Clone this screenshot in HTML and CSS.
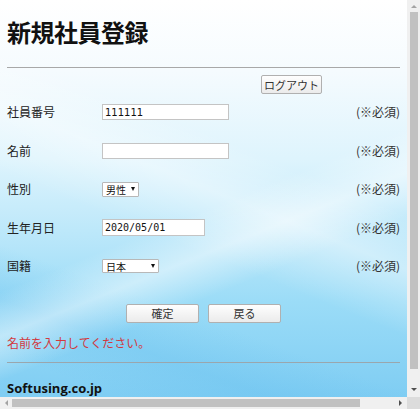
FILE: index.html
```html
<!DOCTYPE html>
<html lang="ja">
<head>
<meta charset="utf-8">
<title>新規社員登録</title>
<link rel="stylesheet" href="styles.css">
</head>
<body>
<div class="window">
  <main class="page">
    <h1 class="title">新規社員登録</h1>
    <hr class="rule rule-top">
    <div class="logout-row"><button class="btn btn-logout" type="button">ログアウト</button></div>
    <form class="form">
      <label class="label">社員番号</label>
      <div class="field"><input class="input input-id" type="text" value="111111"></div>
      <span class="req">(※必須)</span>

      <label class="label">名前</label>
      <div class="field"><input class="input input-name" type="text" value=""></div>
      <span class="req">(※必須)</span>

      <label class="label">性別</label>
      <div class="field"><span class="select select-sex"><span class="select-text">男性</span><span class="arrow"></span></span></div>
      <span class="req">(※必須)</span>

      <label class="label">生年月日</label>
      <div class="field"><input class="input input-date" type="text" value="2020/05/01"></div>
      <span class="req">(※必須)</span>

      <label class="label">国籍</label>
      <div class="field"><span class="select select-nation"><span class="select-text">日本</span><span class="arrow"></span></span></div>
      <span class="req">(※必須)</span>
    </form>
    <div class="actions">
      <button class="btn btn-action" type="button">確定</button>
      <button class="btn btn-action" type="button">戻る</button>
    </div>
    <p class="error">名前を入力してください。</p>
    <hr class="rule rule-bottom">
    <p class="footer">Softusing.co.jp</p>
  </main>
  <div class="vbar">
    <div class="vbtn vbtn-up"><span class="tri tri-up"></span></div>
    <div class="vthumb"></div>
    <div class="vfill"></div>
    <div class="vbtn vbtn-down"><span class="tri tri-down"></span></div>
  </div>
  <div class="hbar">
    <div class="hbtn hbtn-left"><span class="tri tri-left"></span></div>
    <div class="hthumb"></div>
    <div class="hfill"></div>
    <div class="hbtn hbtn-right"><span class="tri tri-right"></span></div>
  </div>
  <div class="corner"></div>
</div>
</body>
</html>
```

FILE: styles.css
```css
* { box-sizing: border-box; }
html, body { margin: 0; padding: 0; }
body {
  width: 420px;
  height: 409px;
  overflow: hidden;
  font-family: "Noto Sans CJK JP", "Noto Sans", sans-serif;
  color: #222;
}
.window {
  display: grid;
  grid-template-columns: 407px 13px;
  grid-template-rows: 397px 12px;
  width: 420px;
  height: 409px;
}
.page {
  overflow: hidden;
  padding: 18px 7px 0 7px;
  background:
    linear-gradient(158deg, rgba(255,255,255,0) 52%, rgba(255,255,255,0.45) 60%, rgba(255,255,255,0) 68%),
    linear-gradient(22deg, rgba(255,255,255,0) 40%, rgba(255,255,255,0.4) 52%, rgba(255,255,255,0) 62%),
    linear-gradient(200deg, rgba(255,255,255,0) 72%, rgba(100,190,238,0.3) 82%, rgba(255,255,255,0) 92%),
    linear-gradient(180deg, #ffffff 0%, #f5fbfe 18%, #def4fd 40%, #bde8fa 58%, #9bdcf7 76%, #7fcdf3 100%);
}
.title {
  margin: 0;
  font-size: 24px;
  line-height: 28px;
  font-weight: 700;
  color: #111;
  letter-spacing: -0.5px;
}
.rule {
  margin: 0;
  border: 0;
  border-top: 1px solid #a8a8a8;
  height: 0;
}
.rule-top { margin-top: 21px; }
.logout-row {
  margin-top: 7px;
  width: 315px;
  display: flex;
  justify-content: flex-end;
  height: 18px;
}
.btn {
  font-family: "Noto Sans CJK JP", sans-serif;
  font-size: 11px;
  color: #333;
  background: linear-gradient(#fefefe, #ebebeb);
  border: 1px solid #b0b0b0;
  border-radius: 2px;
  padding: 0;
  line-height: 16px;
}
.btn-logout {
  width: 61px;
  height: 19px;
}
.form {
  margin-top: 0;
  display: grid;
  grid-template-columns: 95px 1fr auto;
  grid-auto-rows: 38.5px;
  align-items: center;
}
.label {
  font-size: 12px;
  line-height: 16px;
  color: #222;
}
.field { display: flex; align-items: center; }
.req {
  font-size: 12px;
  line-height: 16px;
  color: #333;
  text-align: right;
}
.input {
  height: 16px;
  border: 1px solid #c4c4c4;
  background: #fff;
  padding: 0 2px;
  margin: 0;
  font-family: "DejaVu Sans", sans-serif;
  font-size: 10px;
  line-height: 14px;
  color: #111;
  outline: none;
}
.input-id, .input-name { width: 127px; }
.input-date { width: 103px; height: 17px; font-family: "DejaVu Sans Mono", monospace; font-size: 10px; }
.select {
  position: relative;
  display: flex;
  align-items: center;
  height: 15px;
  background: #fff;
  border: 1px solid #b8b8b8;
  border-radius: 1px;
  padding-left: 3px;
}
.select-sex { width: 37px; }
.select-nation { width: 57px; height: 14px; }
.select-text {
  font-size: 10px;
  line-height: 13px;
  color: #111;
}
.arrow {
  position: absolute;
  right: 3px;
  top: 4px;
  width: 0;
  height: 0;
  border-left: 2.5px solid transparent;
  border-right: 2.5px solid transparent;
  border-top: 4px solid #111;
}
.actions {
  margin-top: 18px;
  display: flex;
  justify-content: center;
  gap: 9px;
}
.btn-action {
  width: 73px;
  height: 19px;
}
.error {
  margin: 12px 0 0 0;
  font-size: 12px;
  line-height: 16px;
  color: #d23a3f;
}
.rule-bottom { margin-top: 11px; border-top-color: #9aa6ad; }
.footer {
  margin: 16px 0 0 0;
  font-family: "Open Sans", sans-serif;
  font-weight: 700;
  font-size: 13px;
  line-height: 18px;
  color: #111;
}
.vbar {
  background: #f0f0f0;
  display: flex;
  flex-direction: column;
  align-items: center;
}
.vbtn {
  width: 13px;
  display: flex;
  align-items: center;
  justify-content: center;
}
.vbtn-up { height: 12px; }
.vbtn-down { height: 16px; }
.vthumb {
  width: 8px;
  height: 357px;
  background: #c1c1c1;
}
.vfill { flex: 1; }
.hbar {
  background: #f0f0f0;
  display: flex;
  align-items: center;
}
.hbtn {
  height: 12px;
  display: flex;
  align-items: center;
  justify-content: center;
}
.hbtn-left { width: 12px; }
.hbtn-right { width: 14px; }
.hthumb {
  width: 348px;
  height: 8px;
  background: #c1c1c1;
}
.hfill { flex: 1; }
.corner { background: #dcdcdc; }
.tri { width: 0; height: 0; display: block; }
.tri-up {
  border-left: 3px solid transparent;
  border-right: 3px solid transparent;
  border-bottom: 3px solid #a3a3a3;
}
.tri-down {
  border-left: 3px solid transparent;
  border-right: 3px solid transparent;
  border-top: 3px solid #505050;
}
.tri-left {
  border-top: 3px solid transparent;
  border-bottom: 3px solid transparent;
  border-right: 3px solid #a3a3a3;
}
.tri-right {
  border-top: 3px solid transparent;
  border-bottom: 3px solid transparent;
  border-left: 3px solid #505050;
}
```
